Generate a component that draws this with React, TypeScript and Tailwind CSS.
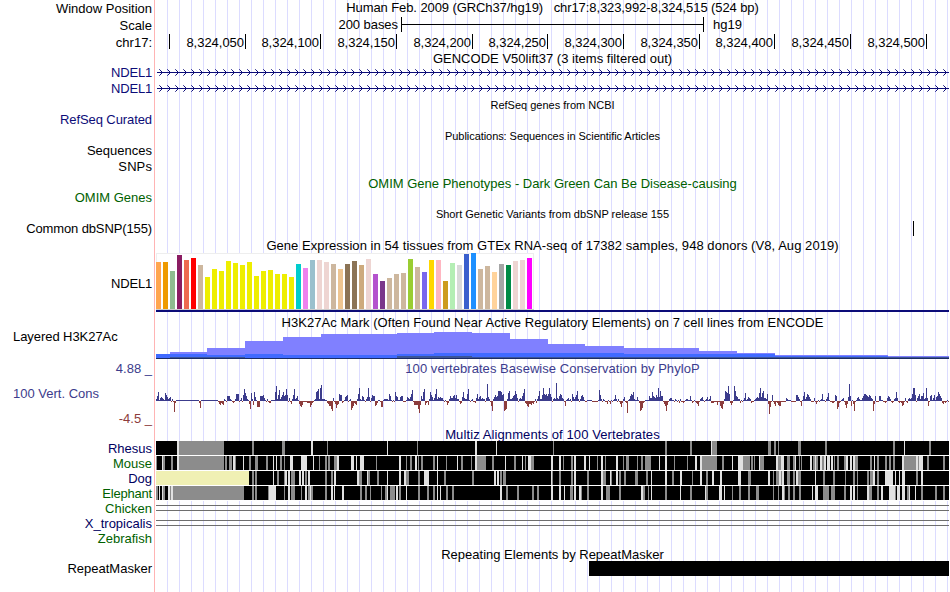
import { ReactNode } from 'react';

const WIDTH = 793;

type Shade = 'g' | 'l' | 'y';
type Block = [number, number, Shade];

const FILLS: Record<Shade, string> = { g: '#8c8c8c', l: '#e1e1e1', y: '#f0f0b4' };

// "x,width" pairs
const parse = (s: string, shade: Shade): Block[] =>
  s.split(' ').map(p => {
    const [x, w] = p.split(',').map(Number);
    return [x, w, shade];
  });

const RULER = [
  { label: '', width: 14 },
  { label: '8,324,050', width: 76 },
  { label: '8,324,100', width: 75 },
  { label: '8,324,150', width: 76 },
  { label: '8,324,200', width: 76 },
  { label: '8,324,250', width: 75 },
  { label: '8,324,300', width: 76 },
  { label: '8,324,350', width: 76 },
  { label: '8,324,400', width: 75 },
  { label: '8,324,450', width: 76 },
  { label: '8,324,500', width: 76 },
];

const TISSUE_HEIGHTS = [
  47, 47, 38, 54, 49, 51, 44, 32, 40, 38, 48, 46, 44, 47, 33, 38, 39, 35, 35, 32, 45, 41, 49, 49, 47, 45, 40,
  45, 48, 44, 50, 35, 28, 31, 35, 36, 50, 42, 37, 49, 49, 28, 46, 44, 55, 56, 40, 43, 37, 45, 44, 48, 49, 51,
];

const TISSUE_COLORS = [
  '#ffa54f', '#ee9a00', '#8fbc8f', '#8b1c62', '#ee6a50', '#ff0000', '#cdb79e',
  ...Array(13).fill('#eeee00'),
  '#00cdcd', '#ee82ee', '#9ac0cd', '#eed5d2', '#eed5d2', '#cdb79e', '#eec591', '#8b7355', '#8b7355', '#cdaa7d',
  '#eed5d2', '#b452cd', '#7a378b', '#cdb79e', '#cdb79e', '#cdb79e', '#9acd32', '#cdb79e', '#7a67ee', '#ffd700',
  '#ffb6c1', '#cd9b1d', '#b4eeb4', '#d9d9d9', '#3a5fcd', '#1e90ff', '#cdb79e', '#cdb79e', '#ffd39b', '#a6a6a6',
  '#008b45', '#eed5d2', '#eed5d2', '#ff00ff',
];

// [start x, height] steps, each runs to the next start
const ACETYL_LIGHT = [
  [0, 4], [14, 6], [51, 10], [89, 17], [127, 21], [165, 24], [241, 25], [278, 26], [316, 25], [354, 19],
  [392, 14], [429, 12], [468, 10], [543, 7], [581, 5], [619, 3], [657, 3], [732, 2], [WIDTH, 0],
];
const ACETYL_BLUE = [
  [0, 4], [51, 3], [89, 4], [127, 3], [241, 4], [278, 5], [430, 5], [468, 4], [581, 4], [619, 2], [732, 1], [WIDTH, 0],
];
const ACETYL_DARK = [[0, 0], [14, 1], [51, 1], [89, 0], [241, 2], [316, 1], [WIDTH, 0]];

// One character per column: lowercase is a positive score, uppercase negative
const PHYLOP = [
  {
    at: 0,
    bars:
      'beiacdcbahfdbcdAbAKB' + 'a'.repeat(23) + 'BG' + 'a'.repeat(17) +
      'ACDBCDbaAeeebaABAbgggAacAflhebaCHhbDidaFFFeeefcaAbABBaaaaiobfkbdfieflfAcACbflbceaCEFDAAAABBBFDBAabijlbmpbbbaaBCEEHJc' +
      'ACGDCgffBAadefAabIGEBCDbgmbaedaAbdmdAcfeeEDBaaAFFabbbbageaAaAiedaadeeAAAadcbdgkAD',
  },
  {
    at: 259,
    bars:
      'DDDHLDebilDBADbifdacglbdcdccaAaADBbeccefcfbbACBdicbbglaAabAABcgbdebcbbAcqdbAEJbdfdejjjifgJIHbhjbbcefjgcAbcbehlBCEFCCDBCAbBbejbbfmgfgegmgdAbcbrcbegfcbAEabcabAgdbdfjbAbefdaAAaaaaaAAAAAAakfbAbaAACaACaAabfbAbACFBbd' +
      'ABLabegfibaadaBJIGBAaaaaecciedcfdmdjeeACEJDAbccaaAbaAaB',
  },
  {
    at: 524,
    bars:
      'bAABAabbaaeaBAaABCEAbcdaAabdabeBBBAAADAAEGHCbjihogBDBaojedbbBaAachabdcbBAAabcdchmdhjccbgCMFAfACEABDEEAAAAAcbaaaAAAAAffdbAEaeibdgfdbAAAcACAaAabgaaAbdhaAABBAfeHFBAabcADGCdqeEaCJAacdbaaceggfedfecbJCeAAAeeaaAABAcedbABAbcicABABEDAcABbcbcgmmfAcegbeehbcmcEAefacfadeigecBCABAaA',
  },
];

const SPECIES: { name: string; color: string; blocks: Block[] }[] = [
  {
    name: 'Rhesus',
    color: 'text-[#00005f]',
    blocks: [
      ...parse('23,45 96,2 126,3 171,1 261,1 397,1 509,2 534,2 556,5 612,3 618,2 622,1 642,3 669,2 737,2 773,2', 'g'),
      ...parse('21,2 155,2 231,1 319,2 340,1 555,1 748,1', 'l'),
    ],
  },
  {
    name: 'Mouse',
    color: 'text-[#005f00]',
    blocks: [
      ...parse(
        '0,1 7,2 15,2 23,45 69,2 73,3 79,1 93,2 99,3 110,2 124,2 128,1 163,1 169,2 172,2 178,3 220,1 250,1 254,2 262,1 265,2 277,2 290,1 305,2 315,1 321,9 336,2 358,2 369,1 375,3 407,1 415,2 441,1 449,1 467,1 470,3 481,1 485,2 489,6 518,1 531,1 546,15 566,2 587,7 595,2 598,1 604,4 622,3 631,3 637,2 643,1 645,1 657,2 660,2 666,2 678,1 681,2 688,2 699,3 714,2 721,2 729,2 733,2 737,2 748,12 762,1 771,2 787,2',
        'g',
      ),
      ...parse(
        '6,1 21,2 77,2 87,1 117,1 120,1 134,3 145,6 157,1 181,2 195,3 200,1 204,4 243,2 259,2 281,1 301,1 319,2 349,1 366,1 372,3 395,2 403,2 418,2 428,2 433,1 445,2 460,2 503,1 509,2 539,2 544,2 576,1 582,5 603,1 620,2 625,3 639,1 654,2 659,1 664,2 668,2 671,3 675,2 690,2 694,2 697,2 718,1 746,2 760,2 763,4',
        'l',
      ),
    ],
  },
  {
    name: 'Dog',
    color: 'text-[#00005f]',
    blocks: [
      [0, 93, 'y'],
      ...parse(
        '96,2 99,2 121,2 128,1 135,4 149,2 169,2 175,2 203,3 212,2 221,2 250,3 262,2 288,2 316,2 344,2 347,3 396,1 403,2 415,2 431,2 447,3 455,1 463,2 468,2 479,3 490,2 516,2 536,1 550,2 592,3 617,1 620,3 625,1 631,3 637,2 642,3 667,2 677,2 689,1 697,2 701,1 711,2 714,3 721,2 760,2',
        'g',
      ),
      ...parse(
        '117,1 129,2 132,2 143,2 146,2 152,2 178,2 201,2 211,1 231,1 243,2 248,2 268,5 281,1 338,2 341,2 395,1 418,2 445,2 454,1 460,2 495,1 509,2 524,2 544,2 556,2 564,2 582,3 612,2 623,2 626,2 640,2 659,1 717,2 729,8 739,1 743,1 746,3 765,2',
        'l',
      ),
    ],
  },
  {
    name: 'Elephant',
    color: 'text-[#005f00]',
    blocks: [
      ...parse(
        '0,2 7,2 14,1 17,71 96,2 99,2 112,1 128,1 135,4 145,1 152,2 155,2 169,2 204,2 209,2 214,1 225,1 229,2 234,5 243,2 262,2 271,2 277,2 290,2 296,2 350,2 361,2 376,2 381,2 414,3 425,1 431,2 450,4 463,2 487,2 492,1 509,2 534,2 550,2 576,1 583,2 592,2 600,3 617,1 622,1 628,1 632,2 637,2 643,2 667,6 675,4 688,2 701,1 713,3 721,2 739,1 751,2 765,2 779,2 787,2',
        'g',
      ),
      ...parse(
        '3,1 6,1 12,2 15,2 113,7 132,2 149,2 154,1 175,2 178,1 186,2 231,1 240,2 250,1 281,1 284,1 344,2 395,2 403,2 408,1 418,2 423,2 445,2 485,2 495,1 524,1 549,1 563,3 568,1 626,2 656,1 659,3 694,2 697,2 711,2 725,2 733,6 741,3 746,3 753,1 759,1',
        'l',
      ),
    ],
  },
];

function Label({ className, children }: { className: string; children?: ReactNode }) {
  return <div className={`shrink-0 pr-[2px] text-right ${className}`}>{children}</div>;
}

function Title({ className, children }: { className: string; children: ReactNode }) {
  return <h2 className={`shrink-0 text-center whitespace-pre ${className}`}>{children}</h2>;
}

function GeneTrack({ height, y }: { height: number; y: number }) {
  const tips = Array.from({ length: 99 }, (_, i) => 6 + i * 8);
  return (
    <svg width={WIDTH} height={height} className="block shrink-0" shapeRendering="crispEdges">
      <rect x={1} y={y} width={WIDTH - 1} height={1} fill="#0c0c78" />
      {tips.map(x => (
        <path
          key={x}
          d={`M${x - 2.7} ${y - 2.7}L${x + 0.5} ${y + 0.5}L${x - 2.7} ${y + 3.7}`}
          fill="none"
          stroke="#0c0c78"
          strokeWidth={1}
          shapeRendering="auto"
        />
      ))}
    </svg>
  );
}

function Expression() {
  return (
    <svg width={WIDTH} height={59} className="block shrink-0" shapeRendering="crispEdges">
      <rect x={0} y={0} width={378} height={57} fill="#eeeeee" />
      <rect x={1} y={1} width={376} height={55} fill="#ffffff" />
      <rect x={0} y={56} width={378} height={1} fill="#cccccc" />
      {TISSUE_HEIGHTS.map((h, i) => (
        <rect key={i} x={i * 7} y={56 - h} width={5} height={h} fill={TISSUE_COLORS[i]} />
      ))}
      <rect x={0} y={57} width={WIDTH} height={2} fill="#0c0c78" />
    </svg>
  );
}

function Steps({ steps, fill }: { steps: number[][]; fill: string }) {
  return (
    <>
      {steps.slice(0, -1).map(([x, h], i) => (
        <rect key={x} x={x} y={26 - h} width={steps[i + 1][0] - x} height={h} fill={fill} />
      ))}
    </>
  );
}

function Acetylation() {
  return (
    <svg width={WIDTH} height={27} className="block shrink-0" shapeRendering="crispEdges">
      <Steps steps={ACETYL_LIGHT} fill="#8080ff" />
      <Steps steps={ACETYL_BLUE} fill="#406aff" />
      <Steps steps={ACETYL_DARK} fill="#3c5596" />
      <rect x={0} y={26} width={WIDTH} height={1} fill="#1c2c64" />
    </svg>
  );
}

function Conservation() {
  return (
    <svg width={WIDTH} height={51} className="block shrink-0" shapeRendering="crispEdges">
      {PHYLOP.flatMap(({ at, bars }) =>
        bars.split('').map((c, i) => {
          const up = c >= 'a';
          const h = c.toLowerCase().charCodeAt(0) - 96;
          return (
            <rect
              key={at + i}
              x={at + i}
              y={up ? 25 - h : 25}
              width={1}
              height={h}
              fill={up ? '#3c3c8c' : '#8c3c3c'}
            />
          );
        }),
      )}
    </svg>
  );
}

function Alignment({ blocks }: { blocks: Block[] }) {
  return (
    <svg width={WIDTH} height={15} className="block shrink-0" shapeRendering="crispEdges">
      <rect width={WIDTH} height={15} fill="#ffffff" />
      <rect width={WIDTH} height={14} fill="#000000" />
      {blocks.map(([x, w, shade]) => (
        <rect key={`${x}${shade}`} x={x} width={w} height={14} fill={FILLS[shade]} />
      ))}
    </svg>
  );
}

function Unaligned() {
  return (
    <div className="h-[15px] shrink-0 pt-1">
      <div className="h-[6px] border-y border-[#6e6e6e]" />
    </div>
  );
}

export default function App() {
  return (
    <div className="flex h-[592px] w-[950px] overflow-hidden bg-white font-['Liberation_Sans',Arial,sans-serif] text-[13px] text-black">
      {/* Track labels */}
      <aside className="flex w-[155px] shrink-0 flex-col border-r border-[#ffb4b4]">
        <Label className="h-[17px] leading-[17px]">Window Position</Label>
        <Label className="h-[17px] leading-[17px]">Scale</Label>
        <Label className="h-[31px] leading-[17px]">chr17:</Label>
        <Label className="h-[15px] leading-[15px] tracking-[-0.2px] text-[#0c0c78]">NDEL1</Label>
        <Label className="h-[32px] leading-[17px] tracking-[-0.2px] text-[#0c0c78]">NDEL1</Label>
        <Label className="h-[31px] leading-[15px] tracking-[-0.09px] text-[#0c0c78]">RefSeq Curated</Label>
        <Label className="h-[15px] leading-[15px]">Sequences</Label>
        <Label className="h-[32px] leading-[17px] tracking-[0.1px]">SNPs</Label>
        <Label className="h-[31px] leading-[15px] text-[#005f00]">OMIM Genes</Label>
        <Label className="h-[32px] leading-[15px] tracking-[-0.12px]">Common dbSNP(155)</Label>
        <Label className="h-[62px] leading-[61px] tracking-[-0.2px]">NDEL1</Label>
        <div className="h-[46px] shrink-0 pl-[13px] leading-[44px] tracking-[-0.06px]">Layered H3K27Ac</div>
        <Label className="h-[16px] leading-[16px] text-[#3c3c8c]">4.88 _</Label>
        <div className="h-[34px] shrink-0 pl-[13px] leading-[33px] text-[#3c3c8c]">100 Vert. Cons</div>
        <Label className="h-[30px] leading-[16px] text-[#8c3c3c]">-4.5 _</Label>
        {SPECIES.map(s => (
          <Label key={s.name} className={`h-[15px] leading-[15px] ${s.color}`}>
            <span className={s.name === 'Elephant' ? 'tracking-[-0.2px]' : ''}>{s.name}</span>
          </Label>
        ))}
        <Label className="h-[15px] leading-[15px] text-[#005f00]">Chicken</Label>
        <Label className="h-[15px] leading-[15px] text-[#00005f]">X_tropicalis</Label>
        <Label className="h-[30px] leading-[15px] text-[#005f00]">Zebrafish</Label>
        <Label className="h-[15px] leading-[15px]">RepeatMasker</Label>
      </aside>

      {/* Tracks */}
      <main className="ml-px flex w-[793px] shrink-0 flex-col bg-[linear-gradient(to_right,transparent_11px,#dcdcff_11px)] bg-size-[12px_592px]">
        <Title className="h-[17px] leading-[16px] tracking-[-0.09px]">
          {'Human Feb. 2009 (GRCh37/hg19)   chr17:8,323,992-8,324,515 (524 bp)'}
        </Title>
        <div className="flex h-[17px] shrink-0 leading-[16px]">
          <span className="w-[245px] pr-[3px] text-right tracking-[-0.05px]">200 bases</span>
          <div className="flex h-[15px] w-[303px] items-center border-x border-black">
            <div className="h-px w-full bg-black" />
          </div>
          <span className="pl-[9px]">hg19</span>
        </div>
        <div className="flex h-[17px] shrink-0 leading-[17px]">
          {RULER.map(({ label, width }) => (
            <div
              key={label}
              className="h-[15px] shrink-0 border-r border-black pr-[1px] text-right tracking-[-0.03px]"
              style={{ width }}
            >
              {label}
            </div>
          ))}
        </div>
        <Title className="h-[14px] leading-[16px] tracking-[0.02px]">GENCODE V50lift37 (3 items filtered out)</Title>
        <GeneTrack height={15} y={7} />
        <GeneTrack height={16} y={8} />
        <Title className="h-[31px] text-[11px] leading-[18px]">RefSeq genes from NCBI</Title>
        <Title className="h-[48px] text-[11px] leading-[18px] tracking-[-0.06px]">
          Publications: Sequences in Scientific Articles
        </Title>
        <Title className="h-[31px] leading-[17px] text-[#005f00]">
          OMIM Gene Phenotypes - Dark Green Can Be Disease-causing
        </Title>
        <Title className="h-[15px] text-[11px] leading-[16px]">Short Genetic Variants from dbSNP release 155</Title>
        <div className="ml-[757px] h-[15px] w-px shrink-0 bg-black" />
        <Title className="h-[17px] leading-[19px] tracking-[0.055px]">
          Gene Expression in 54 tissues from GTEx RNA-seq of 17382 samples, 948 donors (V8, Aug 2019)
        </Title>
        <Expression />
        <Title className="h-[20px] leading-[22px] tracking-[0.05px]">
          H3K27Ac Mark (Often Found Near Active Regulatory Elements) on 7 cell lines from ENCODE
        </Title>
        <Acetylation />
        <Title className="h-[17px] leading-[20px] tracking-[0.05px] text-[#3c3c8c]">
          100 vertebrates Basewise Conservation by PhyloP
        </Title>
        <Conservation />
        <Title className="h-[14px] leading-[16px] tracking-[0.1px] text-[#00005f]">
          Multiz Alignments of 100 Vertebrates
        </Title>
        {SPECIES.map(s => (
          <Alignment key={s.name} blocks={s.blocks} />
        ))}
        <Unaligned />
        <Unaligned />
        <Title className="h-[30px] pt-[15px] leading-[17px]">Repeating Elements by RepeatMasker</Title>
        <div className="ml-[433px] h-[15px] shrink-0 bg-black" />
      </main>
    </div>
  );
}
